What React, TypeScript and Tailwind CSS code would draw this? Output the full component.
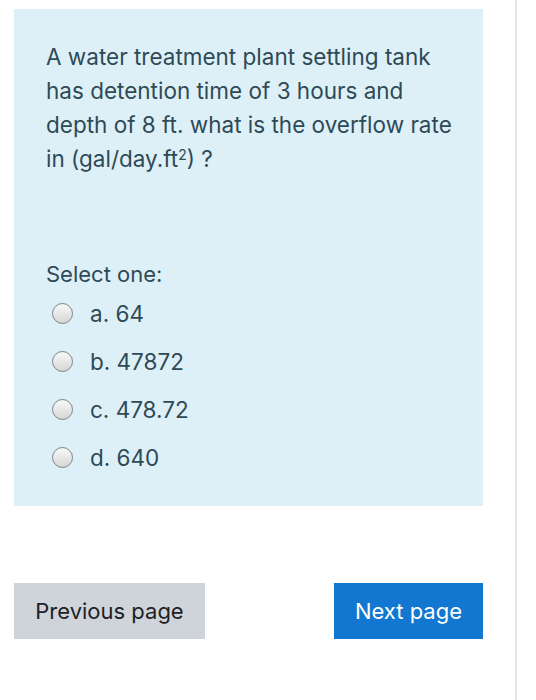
const options = ['a. 64', 'b. 47872', 'c. 478.72', 'd. 640'];

function Radio() {
  return (
    <span className="w-[21px] h-[21px] rounded-full border border-[#7d8388] bg-gradient-to-b from-[#f9f9f9] to-[#d6d6d6] shrink-0" />
  );
}

export default function App() {
  return (
    <div className="w-[536px] h-[700px] bg-white flex font-['Inter',sans-serif] text-[#2e4a56]">
      <div className="w-[515px] pl-[14px] pr-[32px] pt-[9px]">
        {/* Question box */}
        <div className="bg-[#def0f7] h-[497px] pl-[32px] pr-[20px] pt-[31px]">
          <p className="text-[22.5px] leading-[34px]">
            A water treatment plant settling tank<br />
            has detention time of 3 hours and<br />
            depth of 8 ft. what is the overflow rate<br />
            in (gal/day.ft<sup className="text-[14px] leading-none">2</sup>) ?
          </p>

          <p className="text-[22px] mt-[83px] leading-[30px]">Select one:</p>
          <div className="mt-[12px] flex flex-col gap-[23px] pl-[6px]">
            {options.map((o) => (
              <label key={o} className="flex items-center gap-[17px] text-[22.5px] leading-[25px]">
                <Radio />
                <span>{o}</span>
              </label>
            ))}
          </div>
        </div>

        {/* Navigation */}
        <div className="mt-[77px] flex justify-between">
          <button className="w-[191px] h-[56px] bg-[#ced4da] text-[#1d2125] text-[22px]">Previous page</button>
          <button className="w-[149px] h-[56px] bg-[#1177d1] text-white text-[22px]">Next page</button>
        </div>
      </div>
      <div className="w-[2px] bg-[#e6e6e6]" />
    </div>
  );
}
